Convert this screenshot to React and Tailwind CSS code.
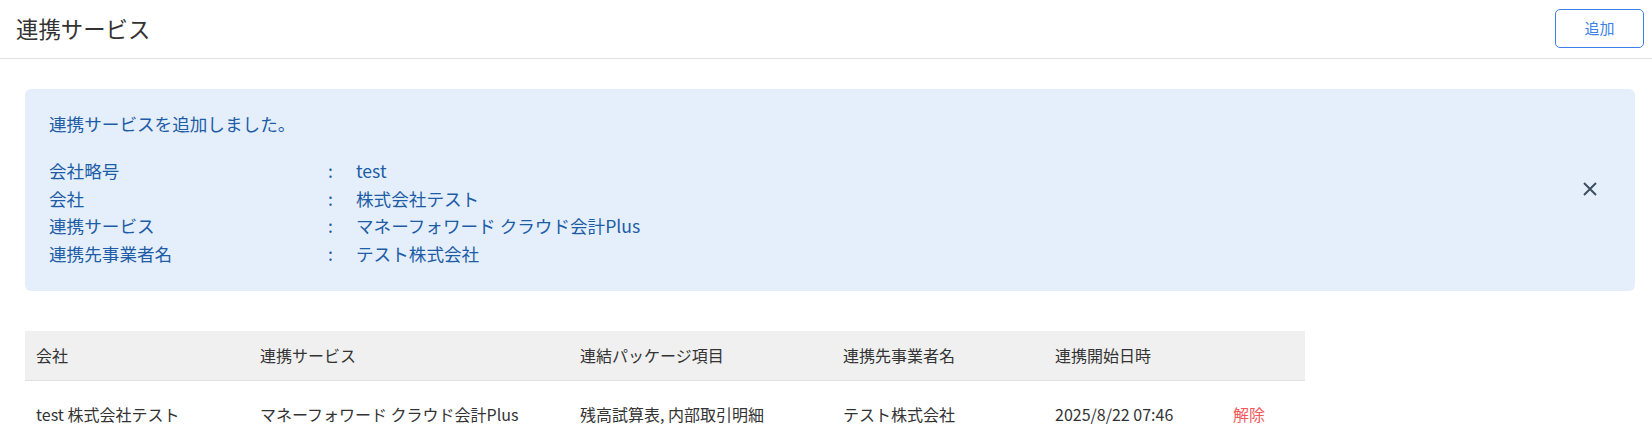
import React from 'react';

const summary = [
  { label: '会社略号', value: 'test' },
  { label: '会社', value: '株式会社テスト' },
  { label: '連携サービス', value: 'マネーフォワード クラウド会計Plus' },
  { label: '連携先事業者名', value: 'テスト株式会社' },
];

const columns = [
  { key: 'company', title: '会社', width: 'w-[224px]' },
  { key: 'service', title: '連携サービス', width: 'w-[320px]' },
  { key: 'items', title: '連結パッケージ項目', width: 'w-[263px]' },
  { key: 'partner', title: '連携先事業者名', width: 'w-[212px]' },
  { key: 'startedAt', title: '連携開始日時', width: 'w-[178px]' },
  { key: 'action', title: '', width: 'w-[83px]' },
];

const rows = [
  {
    company: 'test 株式会社テスト',
    service: 'マネーフォワード クラウド会計Plus',
    items: '残高試算表, 内部取引明細',
    partner: 'テスト株式会社',
    startedAt: '2025/8/22 07:46',
  },
];

export default function App() {
  return (
    <div className="min-h-screen bg-white text-[#333] font-['Noto_Sans_CJK_JP','Noto_Sans',sans-serif]">
      {/* ヘッダー */}
      <header className="flex items-center justify-between h-[59px] border-b border-[#e2e2e2] pl-[16px] pr-[8px]">
        <h1 className="text-[22.4px] leading-none pb-[1px]">連携サービス</h1>
        <button className="w-[89px] h-[39px] rounded-[5px] border border-[#3c7fe6] text-[#3c7fe6] text-[15px] bg-white mb-[2px]">
          追加
        </button>
      </header>

      <main className="pl-[25px] pr-[17px] pt-[30px]">
        {/* 完了メッセージ */}
        <div className="flex items-center rounded-[6px] bg-[#e5effc] text-[#1d5ca6] pl-[24px] pr-[38px] pt-[21px] pb-[24px]">
          <div className="flex-1 text-[17.6px]">
            <p className="leading-[27px]">連携サービスを追加しました。</p>
            <dl className="mt-[20px]">
              {summary.map((item) => (
                <div key={item.label} className="flex leading-[27.5px]">
                  <dt className="w-[279px]">{item.label}</dt>
                  <span className="w-[28px]">:</span>
                  <dd>{item.value}</dd>
                </div>
              ))}
            </dl>
          </div>
          <button className="text-[#3f4d60]" aria-label="閉じる">
            <svg width="14" height="14" viewBox="0 0 14 14" fill="none" stroke="currentColor" strokeWidth="2">
              <path d="M1 1L13 13M13 1L1 13" />
            </svg>
          </button>
        </div>

        {/* 一覧 */}
        <table className="mt-[40px] w-[1280px] table-fixed border-collapse text-[16px]">
          <thead>
            <tr className="bg-[#f0f0f0] border-b border-[#e0e0e0]">
              {columns.map((col) => (
                <th key={col.key} className={`${col.width} h-[49px] pl-[11px] text-left font-normal`}>
                  {col.title}
                </th>
              ))}
            </tr>
          </thead>
          <tbody>
            {rows.map((row) => (
              <tr key={row.company}>
                <td className="h-[68px] pl-[11px]">{row.company}</td>
                <td className="pl-[11px]">{row.service}</td>
                <td className="pl-[11px]">{row.items}</td>
                <td className="pl-[11px]">{row.partner}</td>
                <td className="pl-[11px]">{row.startedAt}</td>
                <td className="pl-[11px]">
                  <button className="text-[#f05a5a]">解除</button>
                </td>
              </tr>
            ))}
          </tbody>
        </table>
      </main>
    </div>
  );
}
